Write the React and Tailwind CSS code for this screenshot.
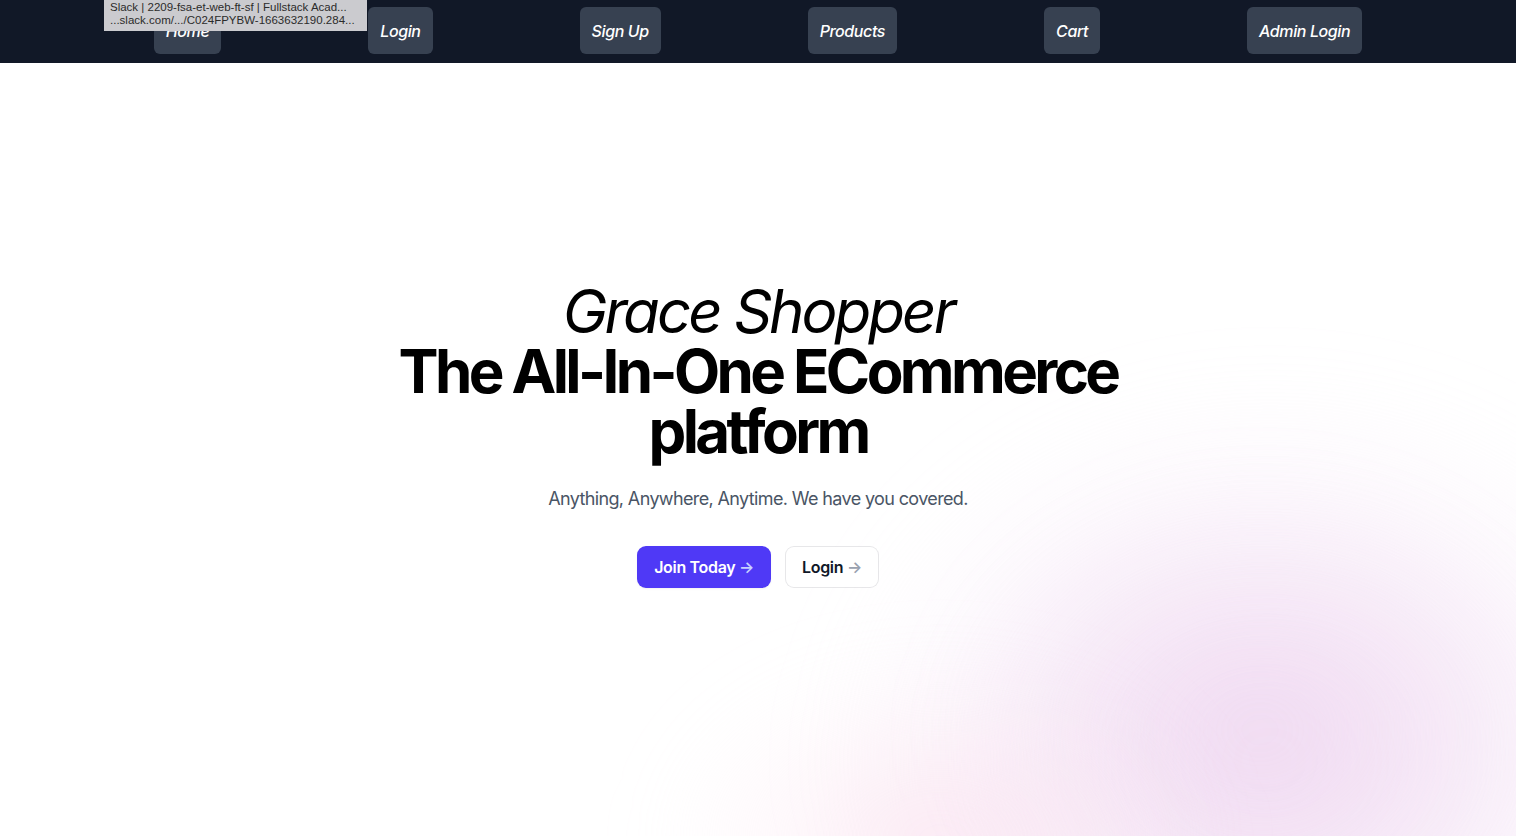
import React from "react";

const navItems = ["Home", "Login", "Sign Up", "Products", "Cart", "Admin Login"];

export default function App() {
  return (
    <div className="relative min-h-[836px] overflow-hidden bg-white" style={{ fontFamily: "Inter, 'Noto Sans', sans-serif" }}>
      <nav className="relative z-10 flex h-[63px] items-start justify-center gap-[147px] bg-[#111827] pt-[7px]">
        {navItems.map((n) => (
          <a
            key={n}
            className="flex h-[47px] items-center rounded-md bg-[#374151] px-3 text-base font-medium italic tracking-[-0.025em] text-white"
          >
            {n}
          </a>
        ))}
      </nav>

      {/* browser link-hover tooltip overlay */}
      <div className="absolute left-[104px] top-0 z-20 w-[263px] bg-[#cbcbcf] px-[6px] pt-[1px] pb-[4px] text-[11.5px] leading-[13px] text-[#2b2b2b]" style={{ fontFamily: "'Liberation Sans', Arial, sans-serif" }}>
        <div className="whitespace-nowrap">Slack | 2209-fsa-et-web-ft-sf | Fullstack Acad...</div>
        <div className="whitespace-nowrap">...slack.com/.../C024FPYBW-1663632190.284...</div>
      </div>

      {/* decorative blurred background */}
      <div className="pointer-events-none absolute inset-0 overflow-hidden">
        <div className="absolute left-[820px] top-[380px] h-[760px] w-[900px] rounded-full bg-[radial-gradient(closest-side,rgba(236,205,238,0.45),rgba(242,222,244,0.3)_55%,rgba(255,255,255,0)_100%)] blur-2xl" />
        <div className="absolute left-[940px] top-[480px] h-[500px] w-[640px] rounded-full bg-[radial-gradient(closest-side,rgba(232,198,234,0.45),rgba(255,255,255,0)_100%)] blur-2xl" />
        <div className="absolute left-[660px] top-[660px] h-[360px] w-[560px] rounded-full bg-[radial-gradient(closest-side,rgba(248,208,228,0.45),rgba(252,228,240,0.25)_55%,rgba(255,255,255,0)_100%)] blur-2xl" />
      </div>

      <main className="relative z-10 mx-auto flex max-w-3xl flex-col items-center pt-[218px]">
        <h1 className="text-center text-6xl font-bold tracking-[-0.06em] text-black">
          <span className="block font-normal italic tracking-[-0.05em]">Grace Shopper</span>
          The All-In-One ECommerce platform
        </h1>
        <p className="mt-[22px] text-center text-lg leading-8 tracking-[-0.035em] text-gray-600">
          Anything, Anywhere, Anytime. We have you covered.
        </p>
        <div className="mt-8 flex justify-center gap-x-4">
          <a className="inline-block rounded-lg bg-indigo-600 px-4 py-1.5 text-base font-semibold leading-7 tracking-[-0.02em] text-white shadow-sm ring-1 ring-indigo-600">
            Join Today <span className="text-indigo-200">→</span>
          </a>
          <a className="inline-block rounded-lg bg-white px-4 py-1.5 text-base font-semibold leading-7 tracking-[-0.02em] text-gray-900 ring-1 ring-gray-900/10">
            Login <span className="text-gray-400">→</span>
          </a>
        </div>
      </main>
    </div>
  );
}
